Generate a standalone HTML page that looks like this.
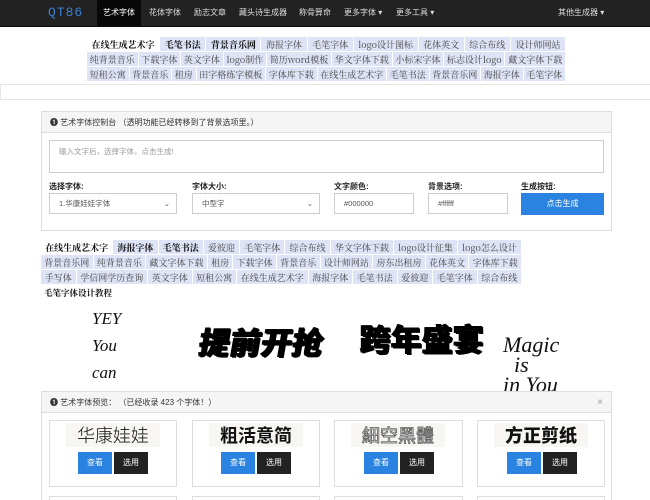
<!DOCTYPE html><html><head><meta charset="utf-8"><style>
*{box-sizing:border-box;margin:0;padding:0}
html,body{width:650px;height:500px;overflow:hidden}
body{background:#fff;font-family:"Liberation Sans","Noto Sans CJK SC",sans-serif;font-size:8px;color:#333;position:relative}
.a{position:absolute}
.nav{left:0;top:0;width:650px;height:27px;background:#222;border-bottom:1px solid #080808}
.nav span{position:absolute;top:0;height:26px;line-height:26px;color:#ddd;font-size:8px}
.tags{position:absolute;background:#dfe3f6;font-family:"Noto Serif CJK SC",serif;font-size:9px}
.tags div{display:flex;height:15px;line-height:15px;border-bottom:1px solid #fff}
.tags i{font-style:normal;flex:auto;text-align:center;border-right:1px solid #fff;white-space:nowrap;color:#444}
.tags b{flex:auto;text-align:center;border-right:1px solid #fff;color:#111;white-space:nowrap}
.tags .w{background:#fff}
.panel{border:1px solid #ddd;background:#fff}
.ph{height:21px;background:#f5f5f5;border-bottom:1px solid #ddd;line-height:21px;padding-left:8px;font-size:8px;color:#333}
.in{border:1px solid #ccc;height:21px;line-height:19px;padding-left:9px;font-size:7.5px;color:#555;background:#fff}
.lb{font-size:8px;font-weight:bold;color:#222}
.card{border:1px solid #ddd;background:#fff}
.bt{position:absolute;width:34px;height:22px;line-height:22px;text-align:center;color:#fff;font-size:8px}
.ft{position:absolute;background:#f7f6f2;font-size:18px;text-align:center;line-height:24px;color:#111;font-family:"Noto Sans CJK SC",sans-serif}
.br{font-family:"Noto Sans CJK SC",sans-serif;font-weight:900;color:#000;position:absolute;text-shadow:1px 1px 0 #000,-1px 0 0 #000}
</style></head><body>
<div class="a nav">
<span style="left:48px;color:#3b7fd0;font-size:13px;letter-spacing:1px;font-family:'Liberation Mono',monospace">QT86</span>
<span style="left:97px;width:44px;background:#080808;text-align:center;color:#fff">艺术字体</span>
<span style="left:149px">花体字体</span><span style="left:194px">励志文章</span><span style="left:239px">藏头诗生成器</span><span style="left:299px">称骨算命</span><span style="left:344px">更多字体 ▾</span><span style="left:396px">更多工具 ▾</span><span style="left:558px">其他生成器 ▾</span>
</div>
<div class="tags" style="left:87px;top:37px;width:479px">
<div><b class="w">在线生成艺术字</b><b>毛笔书法</b><b>背景音乐网</b><i>海报字体</i><i>毛笔字体</i><i>logo设计图标</i><i>花体英文</i><i>综合布线</i><i>设计师网站</i></div>
<div><i>纯背景音乐</i><i>下载字体</i><i>英文字体</i><i>logo制作</i><i>简历word模板</i><i>华文字体下载</i><i>小标宋字体</i><i>标志设计logo</i><i>藏文字体下载</i></div>
<div><i>短租公寓</i><i>背景音乐</i><i>租房</i><i>田字格练字模板</i><i>字体库下载</i><i>在线生成艺术字</i><i>毛笔书法</i><i>背景音乐网</i><i>海报字体</i><i>毛笔字体</i></div>
</div>
<div class="a" style="left:0;top:84px;width:650px;height:16px;border:1px solid #e5e5e5;border-right:none"></div>
<div class="a panel" style="left:41px;top:111px;width:571px;height:120px">
<div class="ph"><b>❶</b> 艺术字体控制台 （透明功能已经转移到了背景选项里。）</div>
</div>
<div class="a in" style="left:49px;top:140px;width:555px;height:33px;line-height:22px;color:#999">输入文字后，选择字体，点击生成!</div>
<div class="a lb" style="left:49px;top:181px">选择字体:</div><div class="a lb" style="left:192px;top:181px">字体大小:</div><div class="a lb" style="left:334px;top:181px">文字颜色:</div><div class="a lb" style="left:428px;top:181px">背景选项:</div><div class="a lb" style="left:521px;top:181px">生成按钮:</div>
<div class="a in" style="left:49px;top:193px;width:128px">1.华康娃娃字体<span style="float:right;margin-right:6px">⌄</span></div>
<div class="a in" style="left:192px;top:193px;width:128px">中型字<span style="float:right;margin-right:6px">⌄</span></div>
<div class="a in" style="left:334px;top:193px;width:80px">#000000</div>
<div class="a in" style="left:428px;top:193px;width:80px">#ffffff</div>
<div class="a" style="left:521px;top:193px;width:83px;height:22px;background:#2a83e0;color:#fff;text-align:center;line-height:22px">点击生成</div>
<div class="tags" style="left:41px;top:240px;width:481px">
<div><b class="w">在线生成艺术字</b><b>海报字体</b><b>毛笔书法</b><i>爱彼迎</i><i>毛笔字体</i><i>综合布线</i><i>华文字体下载</i><i>logo设计征集</i><i>logo怎么设计</i></div>
<div><i>背景音乐网</i><i>纯背景音乐</i><i>藏文字体下载</i><i>租房</i><i>下载字体</i><i>背景音乐</i><i>设计师网站</i><i>房东出租房</i><i>花体英文</i><i>字体库下载</i></div>
<div><i>手写体</i><i>学信网学历查询</i><i>英文字体</i><i>短租公寓</i><i>在线生成艺术字</i><i>海报字体</i><i>毛笔书法</i><i>爱彼迎</i><i>毛笔字体</i><i>综合布线</i></div>
</div>
<div class="a" style="left:44px;top:287px;font-family:'Noto Serif CJK SC',serif;font-weight:bold;font-size:8.5px;color:#111">毛笔字体设计教程</div>
<div class="a" style="left:92px;top:305px;width:40px;font-size:17px;line-height:27px;font-style:italic;font-family:'Liberation Serif',serif;color:#111">YEY<br>You<br>can</div>
<div class="br" style="left:200px;top:318px;font-size:31px;transform:skewX(-10deg)">提前开抢</div>
<div class="br" style="left:360px;top:315px;font-size:31px">跨年盛宴</div>
<div class="a" style="left:503px;top:335px;font-family:'Liberation Serif',serif;font-style:italic;font-size:22px;line-height:20px;color:#111">Magic<br>&nbsp; is<br>in You</div>
<div class="a panel" style="left:41px;top:391px;width:571px;height:120px">
<div class="ph"><b>❶</b> 艺术字体预览： （已经收录 423 个字体！）<span style="float:right;margin-right:8px;color:#999;font-size:10px">×</span></div>
</div>
<div class="a card" style="left:49px;top:420px;width:128px;height:67px"></div>
<div class="a card" style="left:192px;top:420px;width:128px;height:67px"></div>
<div class="a card" style="left:334px;top:420px;width:129px;height:67px"></div>
<div class="a card" style="left:477px;top:420px;width:128px;height:67px"></div>
<div class="a card" style="left:49px;top:496px;width:128px;height:10px"></div><div class="a card" style="left:192px;top:496px;width:128px;height:10px"></div><div class="a card" style="left:334px;top:496px;width:129px;height:10px"></div><div class="a card" style="left:477px;top:496px;width:128px;height:10px"></div>
<div class="ft" style="left:66px;top:423px;width:94px;font-weight:300">华康娃娃</div>
<div class="ft" style="left:209px;top:423px;width:94px;font-weight:bold">粗活意简</div>
<div class="ft" style="left:351px;top:423px;width:94px;color:#fff;-webkit-text-stroke:0.8px #555">細空黑體</div>
<div class="ft" style="left:494px;top:423px;width:94px;font-weight:900">方正剪纸</div>
<div class="bt" style="left:78px;top:452px;background:#2a83e0">查看</div><div class="bt" style="left:114px;top:452px;background:#222">选用</div>
<div class="bt" style="left:221px;top:452px;background:#2a83e0">查看</div><div class="bt" style="left:257px;top:452px;background:#222">选用</div>
<div class="bt" style="left:364px;top:452px;background:#2a83e0">查看</div><div class="bt" style="left:400px;top:452px;background:#222">选用</div>
<div class="bt" style="left:507px;top:452px;background:#2a83e0">查看</div><div class="bt" style="left:543px;top:452px;background:#222">选用</div>
</body></html>
